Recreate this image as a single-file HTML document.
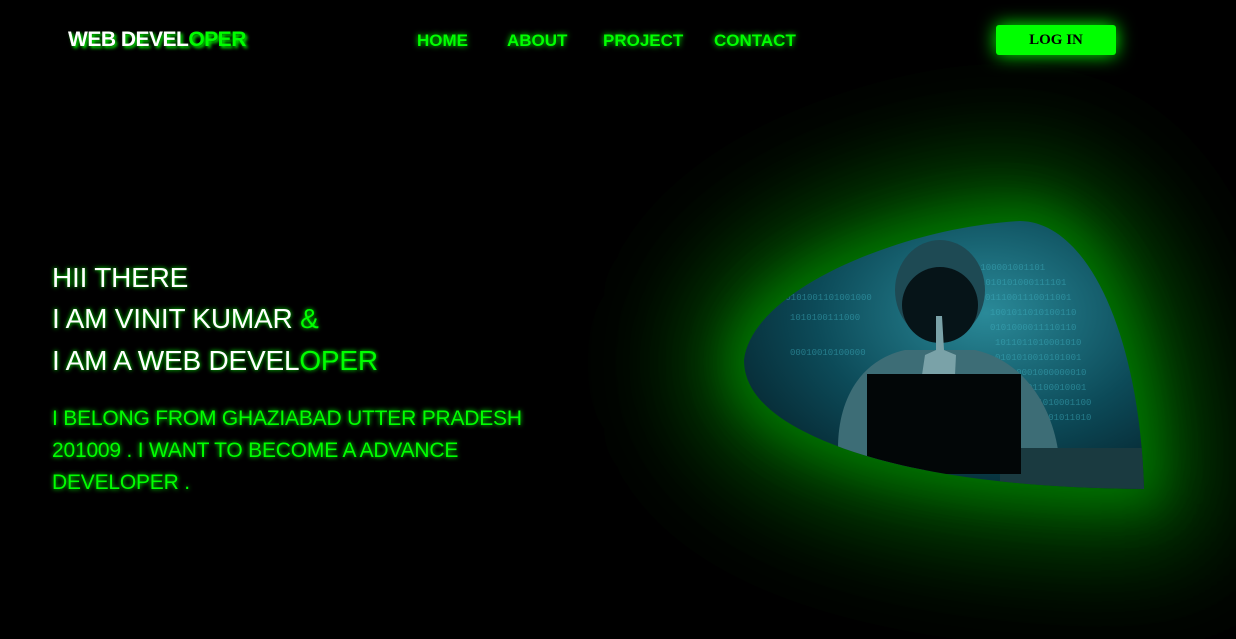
<!DOCTYPE html>
<html><head><meta charset="utf-8"><style>
*{margin:0;padding:0;box-sizing:border-box}
body{width:1236px;height:639px;background:#000;overflow:hidden;font-family:"Liberation Sans",sans-serif;position:relative}
.logo{position:absolute;left:68px;top:28px;font-size:21px;font-weight:bold;color:#fff;letter-spacing:-0.5px;text-shadow:2px 2px 3px #0f0}
.g{color:#0f0}
.nav{position:absolute;top:31px;font-size:17px;font-weight:bold;color:#0f0;text-shadow:0 0 6px #0f0}
.btn{position:absolute;left:996px;top:25px;width:120px;height:30px;background:#00ff00;border-radius:3px;box-shadow:0 0 18px #0f0;font-family:"Liberation Serif",serif;font-weight:bold;font-size:15px;text-align:center;line-height:30px;color:#000}
.h{position:absolute;left:52px;color:#fff;font-size:28px;text-shadow:0 0 4px #0f0;letter-spacing:-0.2px}
.p{position:absolute;left:52px;top:403px;width:520px;color:#0f0;font-size:21px;line-height:32px;text-shadow:0 0 5px #0f0;letter-spacing:-0.2px}
</style></head><body>
<div class="logo">WEB DEVEL<span class="g">OPER</span></div>
<div class="nav" style="left:417px">HOME</div>
<div class="nav" style="left:507px">ABOUT</div>
<div class="nav" style="left:603px">PROJECT</div>
<div class="nav" style="left:714px">CONTACT</div>
<div class="btn">LOG IN</div>
<div class="h" style="top:262px">HII THERE</div>
<div class="h" style="top:303px">I AM VINIT KUMAR <span class="g">&amp;</span></div>
<div class="h" style="top:345px">I AM A WEB DEVEL<span class="g">OPER</span></div>
<div class="p">I BELONG FROM GHAZIABAD UTTER PRADESH 201009 . I WANT TO BECOME A ADVANCE DEVELOPER .</div>
<svg width="1236" height="639" style="position:absolute;left:0;top:0">
<defs>
<filter id="b1" x="-60%" y="-60%" width="220%" height="220%"><feGaussianBlur stdDeviation="55"/></filter>
<filter id="b2" x="-50%" y="-50%" width="200%" height="200%"><feGaussianBlur stdDeviation="22"/></filter>
<radialGradient id="bg" cx="0.6" cy="0.35" r="0.7">
<stop offset="0" stop-color="#2a8a99"/><stop offset="0.6" stop-color="#0c4a58"/><stop offset="1" stop-color="#062630"/>
</radialGradient>
<path id="shp" d="M744,360 C752,290 900,228 1020,221 C1090,222 1140,340 1144,489 C1000,488 880,470 805,432 C765,412 744,388 744,360Z"/>
<clipPath id="c"><use href="#shp"/></clipPath>
</defs>
<use href="#shp" fill="#005500" stroke="#005500" stroke-width="120" filter="url(#b1)"/>
<use href="#shp" fill="#007a00" stroke="#007000" stroke-width="30" filter="url(#b2)"/>
<g clip-path="url(#c)">
<rect x="740" y="215" width="410" height="280" fill="url(#bg)"/>
<g fill="#3fb0c0" opacity="0.5" font-family="Liberation Mono" font-size="9">
<text x="975" y="270">1100001001101</text><text x="980" y="285">1010101000111101</text><text x="985" y="300">0111001110011001</text><text x="990" y="315">1001011010100110</text><text x="990" y="330">0101000011110110</text><text x="995" y="345">1011011010001010</text><text x="995" y="360">0101010010101001</text><text x="1000" y="375">1110001000000010</text><text x="1000" y="390">0101101100010001</text><text x="1005" y="405">1010011010001100</text><text x="1005" y="420">0110110101011010</text>
<text x="780" y="300">10101001101001000</text><text x="790" y="320">1010100111000</text><text x="790" y="355">00010010100000</text>
</g>
<path d="M838,448 C838,400 860,360 905,350 L975,350 C1020,360 1050,400 1058,450 L1060,470 L838,470Z" fill="#3d6d76"/>
<ellipse cx="940" cy="290" rx="45" ry="50" fill="#1e4a54"/>
<ellipse cx="940" cy="305" rx="38" ry="38" fill="#061418"/>
<path d="M936,316 L942,316 L944,350 L956,355 L955,375 L922,375 L925,355 L936,350Z" fill="#7aa2a8"/>
<rect x="1000" y="448" width="150" height="50" fill="#1a3a40"/>
<rect x="867" y="374" width="154" height="100" fill="#020607"/>
</g>
</svg>
</body></html>
